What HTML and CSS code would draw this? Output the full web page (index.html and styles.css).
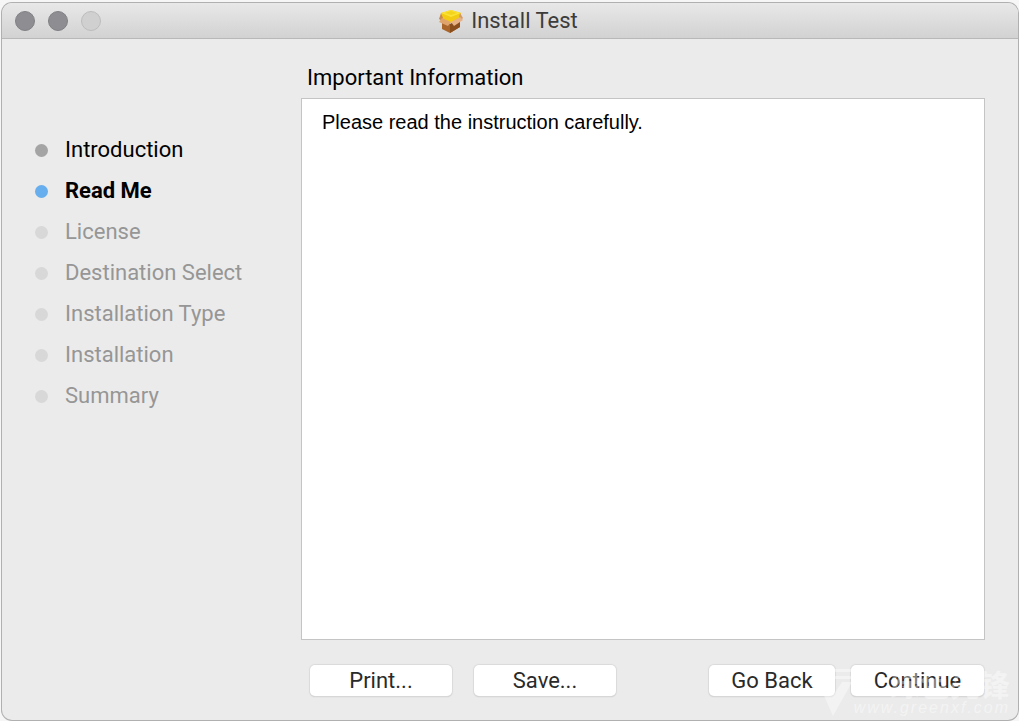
FILE: index.html
```
<!DOCTYPE html>
<html lang="en">
<head>
    <meta charset="UTF-8">
    <meta name="viewport" content="width=device-width, initial-scale=1.0">
    <title>Install Test</title>
    <link rel="stylesheet" href="styles.css">
</head>
<body>
    <div class="window">
        <header class="titlebar">
            <div class="lights">
                <button class="light" type="button" aria-label="Close"></button>
                <button class="light" type="button" aria-label="Minimize"></button>
                <button class="light disabled" type="button" aria-label="Zoom" disabled></button>
            </div>
            <h1 class="title">
                <svg class="package" viewBox="0 0 26 24" aria-hidden="true">
                    <path d="M4 12l9 3 9-4v7l-10 6-8-4z" fill="#a9652a"/>
                    <path d="M12 15l10-5v8l-10 6z" fill="#8a4d1c"/>
                    <path d="M3 4l10-3 10 3-1 6-9 4-9-3z" fill="#f2cb12"/>
                    <path d="M3 4l10-3 10 3-10 4z" fill="#fbe237"/>
                    <path d="M7 4l6-2 6 2-6 2z" fill="#f4d31c"/>
                    <path d="M3 4l-2 6 3 2 1-3z" fill="#c98a50"/>
                    <path d="M4 9l9 4-3 4-9-4z" fill="#dfa36c"/>
                    <path d="M22 4l3 5-2 2-2-3z" fill="#d59a62"/>
                    <path d="M22 8l-9 5 3 4 9-6z" fill="#e8b184"/>
                </svg>
                Install Test
            </h1>
        </header>

        <main class="content">
            <nav class="sidebar">
                <ol class="steps">
                    <li class="step done">Introduction</li>
                    <li class="step current" aria-current="step">Read Me</li>
                    <li class="step">License</li>
                    <li class="step">Destination Select</li>
                    <li class="step">Installation Type</li>
                    <li class="step">Installation</li>
                    <li class="step">Summary</li>
                </ol>
            </nav>

            <section class="pane">
                <h2 class="heading">Important Information</h2>
                <div class="readme">
                    <p>Please read the instruction carefully.</p>
                </div>
                <div class="actions">
                    <button class="btn wide" type="button">Print...</button>
                    <button class="btn wide" type="button">Save...</button>
                    <div class="nav-buttons">
                        <button class="btn back" type="button">Go Back</button>
                        <button class="btn next" type="button">Continue</button>
                    </div>
                </div>
            </section>
        </main>

        <div class="watermark">
            <svg class="watermark-logo" viewBox="0 0 36 50" aria-hidden="true">
                <path d="M0 14h9l7 12 8-12h10L15 48z"/>
                <path d="M12 1h24v3H12zM12 8h24v3H12z"/>
            </svg>
            <div class="watermark-text">
                <span class="watermark-name">绿色先锋</span>
                <span class="watermark-url">www.greenxf.com</span>
            </div>
        </div>
    </div>
</body>
</html>
```
FILE: styles.css
```
* {
    box-sizing: border-box;
}

body {
    margin: 0;
    height: 100vh;
    padding: 3px 1px 1px 2px;
    background-color: #f6f6f6;
    font-family: Roboto, sans-serif;
    font-size: 22px;
    color: #000;
}

.window {
    position: relative;
    display: flex;
    flex-direction: column;
    height: 100%;
    background-color: #ebebeb;
    border-radius: 10px;
    box-shadow: 0 0 0 1px #b0b0b0;
    overflow: hidden;
}

.titlebar {
    display: grid;
    grid-template-columns: 1fr auto 1fr;
    align-items: center;
    height: 36px;
    padding: 0 17px 0 13px;
    background: linear-gradient(#e8e8e8, #d2d2d2);
    border-bottom: 1px solid #b8b8b8;
}

.lights {
    display: flex;
    gap: 13px;
}

.light {
    width: 20px;
    height: 20px;
    padding: 0;
    border: 1px solid #818085;
    border-radius: 50%;
    background-color: #8e8d92;
}

.light.disabled {
    background-color: #d0d0d0;
    border-color: #bcbcbc;
}

.title {
    display: flex;
    align-items: center;
    gap: 7px;
    margin: 0;
    padding-top: 1px;
    font-size: 22px;
    font-weight: 400;
    line-height: 28px;
    color: #3c3c3c;
}

.package {
    width: 26px;
    height: 24px;
}

.content {
    display: flex;
    flex: 1;
    min-height: 0;
}

.sidebar {
    flex: 0 0 299px;
    padding: 90px 0 0 33px;
}

.steps {
    margin: 0;
    padding: 0;
    list-style: none;
}

.step {
    display: flex;
    align-items: center;
    gap: 17px;
    line-height: 41px;
    color: #969696;
}

.step::before {
    content: "";
    width: 13px;
    height: 13px;
    margin-top: 2px;
    border-radius: 50%;
    background-color: #d8d8d8;
}

.step.done {
    color: #000;
}

.step.done::before {
    background-color: #a4a4a4;
}

.step.current {
    color: #000;
    font-weight: 700;
}

.step.current::before {
    background-color: #67aeee;
}

.pane {
    display: flex;
    flex: 1;
    flex-direction: column;
    padding: 25px 33px 24px 0;
}

.heading {
    margin: 0;
    padding: 0 6px 6px;
    font-size: 22px;
    font-weight: 400;
    line-height: 28px;
}

.readme {
    flex: 1;
    padding: 11px 20px;
    background-color: #fff;
    border: 1px solid #c4c4c4;
    font-family: "Liberation Sans", Arial, sans-serif;
    font-size: 20px;
    line-height: 24px;
}

.readme p {
    margin: 0;
}

.actions {
    display: flex;
    gap: 22px;
    padding: 25px 1px 0 9px;
}

.nav-buttons {
    display: flex;
    gap: 16px;
    margin-left: auto;
}

.btn {
    height: 31px;
    padding: 0;
    border: 0;
    border-radius: 5px;
    background-color: #fff;
    box-shadow: 0 0 1px 1px #dadada, 0 1px 1px #b8b8b8;
    font-family: inherit;
    font-size: 22px;
    line-height: 31px;
    color: #2a2a2a;
}

.wide {
    width: 142px;
}

.back {
    width: 126px;
}

.next {
    width: 133px;
}

/* site mark laid over the bottom corner */
.watermark {
    position: absolute;
    right: 8px;
    bottom: 2px;
    display: flex;
    color: #fff;
    opacity: 0.4;
    pointer-events: none;
}

.watermark-logo {
    width: 36px;
    height: 50px;
    fill: currentColor;
}

.watermark-text {
    display: flex;
    flex-direction: column;
}

.watermark-name {
    font-family: "Noto Sans CJK SC", sans-serif;
    font-size: 30px;
    font-weight: 700;
    line-height: 30px;
    text-align: right;
}

.watermark-url {
    font-family: "Liberation Sans", Arial, sans-serif;
    font-size: 16px;
    font-style: italic;
    letter-spacing: 2px;
    line-height: 20px;
}
```
